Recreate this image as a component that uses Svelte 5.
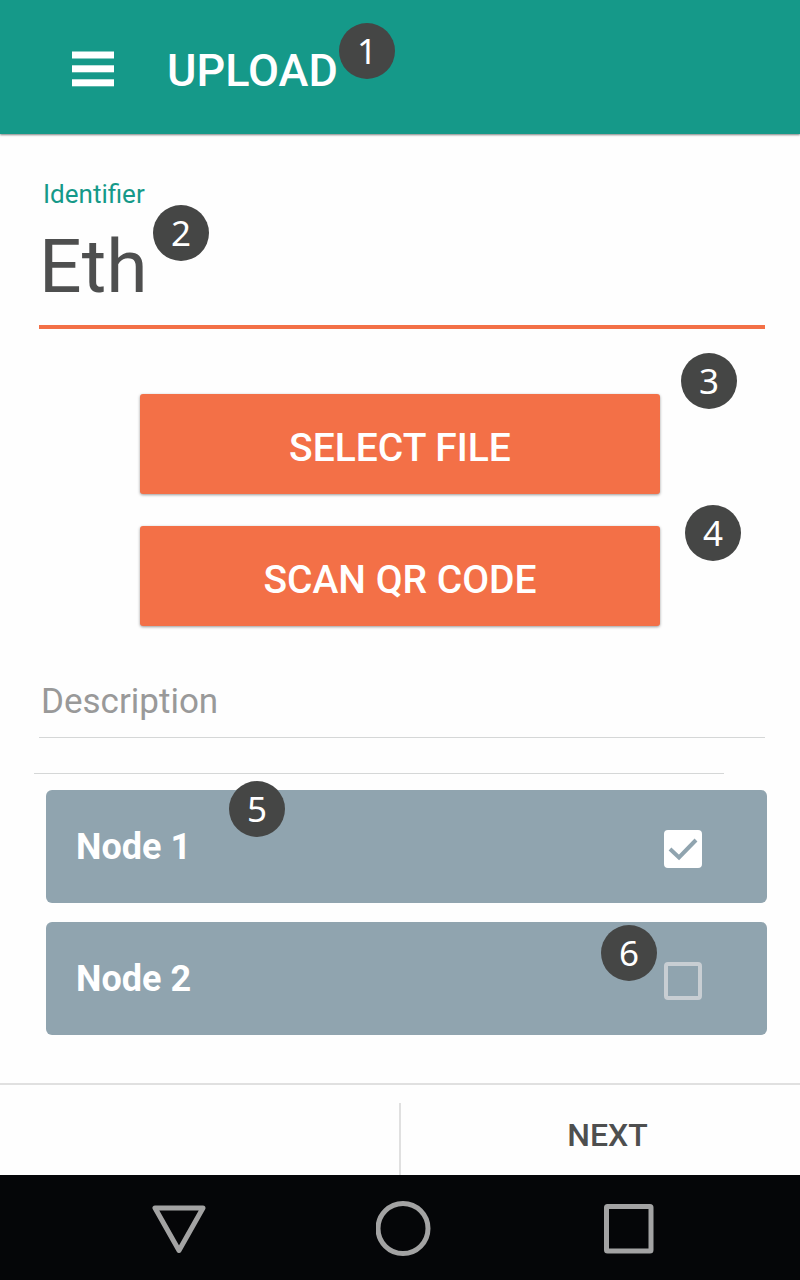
<script>
  let identifier = $state('Eth');
  let description = $state('');
  let nodes = $state([
    { name: 'Node 1', checked: true },
    { name: 'Node 2', checked: false }
  ]);
</script>

<div class="page">
  <header>
    <button class="menu" aria-label="Menu">
      <svg viewBox="0 0 42 36" width="42" height="36" fill="#fff">
        <rect y="0.500" width="42" height="7" />
        <rect y="14.300" width="42" height="7" />
        <rect y="28.300" width="42" height="7" />
      </svg>
    </button>
    <h1>UPLOAD<span class="badge b1">1</span></h1>
  </header>

  <main>
    <div class="field">
      <label for="identifier">Identifier</label>
      <input id="identifier" class="big" type="text" bind:value={identifier} />
      <span class="badge b2">2</span>
    </div>

    <div class="actions">
      <div class="action">
        <button>SELECT FILE</button>
        <span class="badge b3">3</span>
      </div>
      <div class="action">
        <button>SCAN QR CODE</button>
        <span class="badge b4">4</span>
      </div>
    </div>

    <input class="description" type="text" placeholder="Description" aria-label="Description" bind:value={description} />

    <hr />

    <ul>
      {#each nodes as node, i}
        <li>
          <label class="node">
            <span>{node.name}</span>
            <span class="check">
              <input type="checkbox" bind:checked={node.checked} />
              {#if node.checked}
                <svg viewBox="0 0 38 38" width="38" height="38" fill="none" stroke="#90a4af" stroke-width="4">
                  <path d="M6 19 L15 27.500 L32 10" />
                </svg>
              {/if}
            </span>
          </label>
          <span class="badge {i === 0 ? 'b5' : 'b6'}">{i + 5}</span>
        </li>
      {/each}
    </ul>
  </main>

  <footer>
    <div class="blank"></div>
    <button>NEXT</button>
  </footer>

  <nav aria-label="System">
    <button aria-label="Back">
      <svg viewBox="0 0 56 56" width="56" height="56">
        <path d="M4 8 H52 L28 50.500 Z" />
      </svg>
    </button>
    <button aria-label="Home">
      <svg viewBox="0 0 56 56" width="56" height="56"><circle cx="27" cy="28.500" r="25" /></svg>
    </button>
    <button aria-label="Recent apps">
      <svg viewBox="0 0 56 56" width="56" height="56"><rect x="5.500" y="6.500" width="44.500" height="44.500" rx="1" /></svg>
    </button>
  </nav>
</div>

<style>
  :global(body) {
    background: #fefefe;
  }

  .page {
    display: flex;
    flex-direction: column;
    min-height: 100vh;
    font-family: Roboto, sans-serif;
    color: #4e4f4f;
  }

  .page,
  .page * {
    box-sizing: border-box;
  }

  button {
    border: 0;
    padding: 0;
    background: none;
    font: inherit;
    color: inherit;
    cursor: pointer;
  }

  svg {
    display: block;
  }

  input {
    border: 0;
    padding: 0;
    margin: 0;
    background: none;
    font-family: inherit;
    color: inherit;
    outline: none;
    border-radius: 0;
  }

  header {
    display: flex;
    align-items: center;
    gap: 53px;
    height: 134px;
    padding: 4px 72px 0;
    background: #159989;
    box-shadow: 0 1px 2px rgba(0, 0, 0, 0.5);
  }

  h1 {
    position: relative;
    margin: 0;
    padding-top: 4px;
    font-size: 45px;
    line-height: 56px;
    font-weight: 500;
    color: #fff;
  }

  .badge {
    position: absolute;
    width: 56px;
    height: 56px;
    border-radius: 50%;
    background: #454645;
    color: #fff;
    font: 400 35px/56px 'Noto Sans', sans-serif;
    text-align: center;
    pointer-events: none;
  }

  .b1 { left: 172px; top: -16px; }
  .b2 { left: 114px; top: 26px; }
  .b3 { left: calc(100% + 21px); top: -41px; }
  .b4 { left: calc(100% + 25px); top: -21px; }
  .b5 { left: 183px; top: -9px; }
  .b6 { right: 110px; top: 3px; }

  main {
    flex: 1;
    padding: 45px 33px 47px 39px;
  }

  .field {
    position: relative;
    display: flex;
    flex-direction: column;
    margin-right: 2px;
  }

  .field label {
    padding-left: 4px;
    font-size: 26px;
    line-height: 30px;
    color: #159989;
  }

  .big {
    width: 100%;
    height: 120px;
    padding-bottom: 2px;
    border-bottom: 4px solid #f37047;
    font-size: 75px;
  }

  .actions {
    display: flex;
    flex-direction: column;
    gap: 32px;
    margin: 65px 107px 0 101px;
  }

  .action {
    position: relative;
  }

  .action button {
    display: block;
    width: 100%;
    height: 100px;
    padding-top: 8px;
    border-radius: 3px;
    background: #f37047;
    box-shadow: 0 1px 3px rgba(0, 0, 0, 0.4);
    color: #fff;
    font-size: 39px;
    font-weight: 500;
  }

  .description {
    display: block;
    width: calc(100% - 2px);
    height: 76px;
    margin-top: 36px;
    padding: 3px 0 0 2px;
    border-bottom: 1px solid #d5d7d7;
    font-size: 35px;
  }

  .description::placeholder {
    color: #999;
    opacity: 1;
  }

  hr {
    height: 1px;
    margin: 35px 43px 16px -5px;
    border: 0;
    background: #d5d7d7;
  }

  ul {
    display: flex;
    flex-direction: column;
    gap: 19px;
    margin: 0;
    padding: 0 0 0 7px;
    list-style: none;
  }

  li {
    position: relative;
  }

  .node {
    display: flex;
    align-items: center;
    justify-content: space-between;
    height: 113px;
    padding: 0 65px 0 30px;
    border-radius: 6px;
    background: #90a4af;
    color: #fff;
    font-size: 36px;
    line-height: 44px;
    font-weight: 700;
  }

  .check {
    display: grid;
    padding-top: 5px;
  }

  .check > :global(*) {
    grid-area: 1 / 1;
  }

  .check input {
    appearance: none;
    width: 38px;
    height: 38px;
    border: 4px solid #c8ced3;
    border-radius: 4px;
  }

  .check input:checked {
    border-color: #fff;
    background: #fff;
  }

  .check svg {
    pointer-events: none;
  }

  footer {
    display: grid;
    grid-template-columns: 1fr 1fr;
    height: 92px;
    padding-top: 18px;
    border-top: 2px solid #e0e0e0;
  }

  .blank {
    border-right: 1px solid #e0e0e0;
  }

  footer button {
    padding: 0 0 8px 14px;
    border-left: 1px solid #e0e0e0;
    font-size: 32px;
    font-weight: 500;
  }

  nav {
    display: grid;
    grid-template-columns: repeat(3, 1fr);
    align-items: center;
    height: 105px;
    padding: 0 59px 0 66px;
    background: #050608;
  }

  nav button {
    display: flex;
    justify-content: center;
  }

  nav svg {
    fill: none;
    stroke: #a3a3a3;
    stroke-width: 5;
    stroke-linejoin: round;
  }
</style>
